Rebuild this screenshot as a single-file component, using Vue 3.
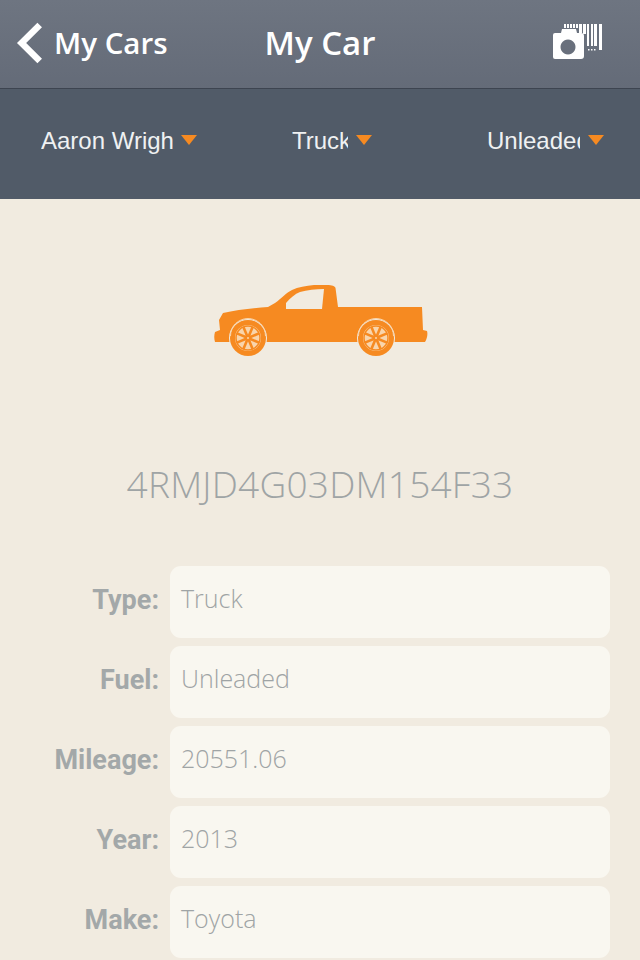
<template>
  <div class="screen">
    <header class="nav">
      <button class="back">
        <svg width="28" height="44" viewBox="0 0 28 44">
          <path d="M24.7 5 L6.6 23 L24.7 41" fill="none" stroke="#fff" stroke-width="6.5" />
        </svg>
        <span>My Cars</span>
      </button>
      <h1 class="title">My Car</h1>
      <svg class="scan" width="52" height="36" viewBox="0 0 52 36">
        <path
          fill="#fff"
          fill-rule="evenodd"
          d="M3 9h6l1-4h14l1 4h4a3 3 0 0 1 3 3v20a3 3 0 0 1-3 3H3a2 2 0 0 1-2-2V11a2 2 0 0 1 2-2z M16 15.5a7.5 7.5 0 1 0 0.01 0z"
        />
        <path
          fill="#fff"
          d="M12 0h2v4h-2z M15 0h2v4h-2z M18 0h2v4h-2z M21 0h2v4h-2z M24 0h2v4h-2z M27 0h3v9h-3z M31 0h3v10h-3z M35 0h2v22h-2z M39 0h2v22h-2z M42 0h3v22h-3z M47 0h3v26h-3z"
        />
        <path fill="#fff" d="M36 25h1.5v1.5h-1.5z M39 25h1.5v1.5h-1.5z M42 25h1.5v1.5h-1.5z" />
      </svg>
    </header>

    <div class="filters">
      <div v-for="f in filters" :key="f.label" class="filter" :class="f.cls">
        <span class="filter-text" :style="{ width: f.width + 'px' }">{{ f.label }}</span>
        <span class="caret"></span>
      </div>
    </div>

    <main class="content">
      <svg class="truck" width="214" height="74" viewBox="0 0 214 74">
        <path
          fill="#f68a21"
          d="M1 48 L6 46 L5 36 L9 29 C22 26 40 24 54 23 L61 19 C68 14 72 9 78 6 C84 3 92 2 100 1 L113 1 C118 1 121 2 121.5 4 L124 23 L208 23 L209 46 L213 47 C214 50 213 55 211 58 L1 58 C0 55 0 51 1 48 Z"
        />
        <path fill="#f1ebe0" d="M72 25 L72 19 C76 14 81 10 86 8 C93 6 102 5 110 5 L108 25 Z" />
        <g v-for="x in [34, 162]" :key="x">
          <circle :cx="x" cy="54" r="19" fill="#f1ebe0" />
          <circle :cx="x" cy="54" r="18" fill="#f68a21" />
          <path :d="`M${x - 17.5} 52 A17.5 17.5 0 0 1 ${x + 17.5} 52`" fill="none" stroke="#f9d5ac" stroke-width="1" />
          <circle :cx="x" cy="54" r="13" fill="#f9d5ac" />
          <circle :cx="x" cy="54" r="12" fill="none" stroke="#f68a21" stroke-width="1.5" />
          <g stroke="#f68a21" stroke-width="2.6">
            <line v-for="a in spokes" :key="a" :x1="x" y1="54" :x2="x + 12 * Math.cos(a)" :y2="54 + 12 * Math.sin(a)" />
          </g>
          <circle :cx="x" cy="54" r="3" fill="#f68a21" />
          <circle :cx="x" cy="54" r="1" fill="#f9d5ac" />
        </g>
      </svg>

      <div class="vin">4RMJD4G03DM154F33</div>

      <div class="form">
        <div v-for="row in rows" :key="row.label" class="row">
          <label>{{ row.label }}:</label>
          <div class="field">{{ row.value }}</div>
        </div>
      </div>
    </main>
  </div>
</template>

<script setup>
const filters = [
  { label: 'Aaron Wright', width: 132, cls: 'f1' },
  { label: 'Truck', width: 56, cls: 'f2' },
  { label: 'Unleaded', width: 93, cls: 'f3' }
]

const rows = [
  { label: 'Type', value: 'Truck' },
  { label: 'Fuel', value: 'Unleaded' },
  { label: 'Mileage', value: '20551.06' },
  { label: 'Year', value: '2013' },
  { label: 'Make', value: 'Toyota' }
]

const spokes = Array.from({ length: 8 }, (_, i) => (i * Math.PI) / 4 + Math.PI / 8)
</script>

<style>
html,
body {
  margin: 0;
  background: #f1ebe0;
}
</style>

<style scoped>
.screen {
  width: 640px;
  height: 960px;
  overflow: hidden;
  background: #f1ebe0;
  font-family: "Open Sans", "Noto Sans", sans-serif;
}

.nav {
  height: 84px;
  position: relative;
  display: flex;
  align-items: center;
  justify-content: space-between;
  padding: 0 36px 4px 15px;
  background: linear-gradient(#6e7581, #646b78);
  border-bottom: 1px solid #3d4450;
}

.back {
  display: flex;
  align-items: center;
  gap: 11px;
  padding: 0;
  border: none;
  background: none;
  color: #fff;
  font: 600 29.5px "Open Sans", sans-serif;
}

.title {
  position: absolute;
  left: 0;
  right: 0;
  margin: 0;
  text-align: center;
  color: #fff;
  font-size: 33px;
  font-weight: 600;
  pointer-events: none;
}

.filters {
  height: 110px;
  position: relative;
  display: flex;
  align-items: center;
  padding-bottom: 6px;
  box-sizing: border-box;
  background: #515b68;
}

.filter {
  display: flex;
  align-items: center;
  gap: 8px;
  color: #eff1f2;
}

.f1 {
  width: 250px;
  padding-left: 41px;
  box-sizing: border-box;
}

.f2 {
  width: 195px;
  padding-left: 42px;
  box-sizing: border-box;
}

.f3 {
  padding-left: 42px;
}

.filter-text {
  overflow: hidden;
  white-space: nowrap;
  font-family: "Liberation Sans", sans-serif;
  font-size: 24px;
  line-height: 36px;
}

.caret {
  width: 0;
  height: 0;
  margin-top: -3px;
  border-left: 8px solid transparent;
  border-right: 8px solid transparent;
  border-top: 10px solid #f68a21;
}

.content {
  display: flex;
  flex-direction: column;
  align-items: center;
}

.truck {
  margin-top: 85px;
  margin-left: 1px;
}

.vin {
  margin-top: 101px;
  color: #9fa4a5;
  font-size: 37px;
  font-weight: 300;
  letter-spacing: 0.25px;
  line-height: 50px;
}

.form {
  width: 100%;
  margin-top: 57px;
  display: flex;
  flex-direction: column;
  gap: 8px;
}

.row {
  display: flex;
  align-items: center;
  gap: 11px;
  padding-right: 30px;
}

.row label {
  width: 159px;
  margin-bottom: 4px;
  text-align: right;
  color: #a3a8a9;
  font-family: Roboto, sans-serif;
  font-size: 27px;
  font-weight: 700;
}

.field {
  flex: 1;
  height: 72px;
  line-height: 64px;
  padding-left: 11px;
  border-radius: 11px;
  background: #f9f7f0;
  color: #9fa4a5;
  font-size: 25px;
  font-weight: 300;
}
</style>
